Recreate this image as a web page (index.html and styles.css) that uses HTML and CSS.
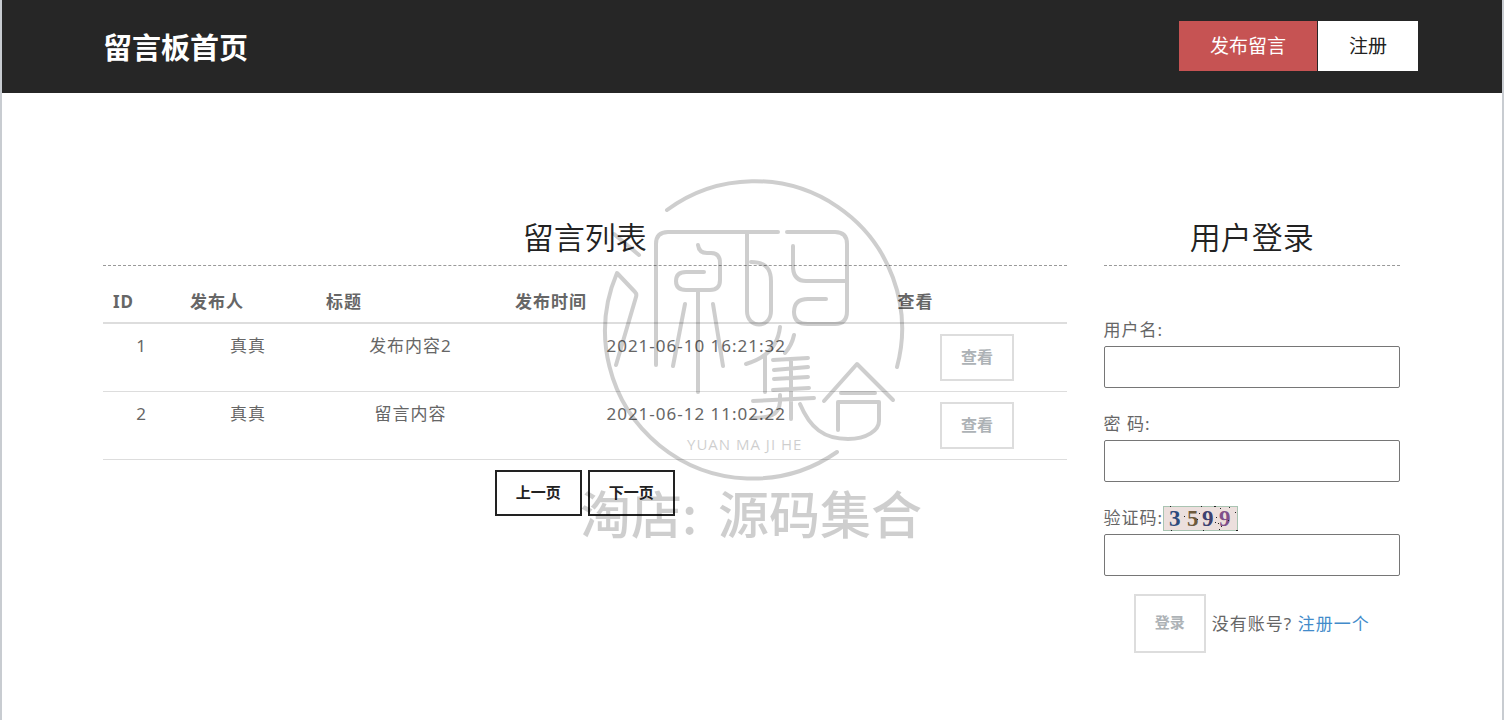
FILE: index.html
```html
<!DOCTYPE html>
<html lang="zh-CN">
<head>
    <meta charset="UTF-8">
    <meta name="viewport" content="width=device-width, initial-scale=1.0">
    <title>留言板首页</title>
    <link rel="stylesheet" href="styles.css">
</head>
<body>
    <header class="header">
        <h1 class="logo">留言板首页</h1>
        <nav class="nav">
            <a href="#post" class="nav-link nav-post">发布留言</a>
            <a href="#register" class="nav-link">注册</a>
        </nav>
    </header>

    <main class="content">
        <section class="messages">
            <h2 class="title">留言列表</h2>
            <table class="table">
                <colgroup>
                    <col class="col-id">
                    <col class="col-user">
                    <col class="col-title">
                    <col>
                    <col class="col-view">
                </colgroup>
                <thead>
                    <tr>
                        <th>ID</th>
                        <th>发布人</th>
                        <th>标题</th>
                        <th>发布时间</th>
                        <th>查看</th>
                    </tr>
                </thead>
                <tbody>
                    <tr>
                        <td>1</td>
                        <td>真真</td>
                        <td>发布内容2</td>
                        <td>2021-06-10 16:21:32</td>
                        <td><button type="button" class="btn btn-view">查看</button></td>
                    </tr>
                    <tr>
                        <td>2</td>
                        <td>真真</td>
                        <td>留言内容</td>
                        <td>2021-06-12 11:02:22</td>
                        <td><button type="button" class="btn btn-view">查看</button></td>
                    </tr>
                </tbody>
            </table>
            <div class="pager">
                <button type="button" class="btn btn-page">上一页</button>
                <button type="button" class="btn btn-page">下一页</button>
            </div>
        </section>

        <aside class="login">
            <h2 class="title">用户登录</h2>
            <form class="login-form">
                <div class="field">
                    <label for="username">用户名:</label>
                    <input type="text" id="username">
                </div>
                <div class="field">
                    <label for="password">密 码:</label>
                    <input type="password" id="password">
                </div>
                <div class="field">
                    <div class="code-row">
                        <label for="code">验证码:</label>
                        <svg class="captcha" viewBox="0 0 75 25">
                            <rect x="0.5" y="0.5" width="74" height="24" fill="#ecdfdd" stroke="#a9c4b2"/>
                            <g class="captcha-text">
                                <text x="6" y="20" fill="#2c4a7c">3</text>
                                <text x="24" y="20" fill="#6d5a3c">5</text>
                                <text x="39" y="20" fill="#3d4170">9</text>
                                <text x="56" y="20" fill="#80508a">9</text>
                            </g>
                            <path d="M7 0h1v1h-1zM38 0h1v1h-1zM51 0h2v1h-2zM57 2h1v1h-1zM66 1h1v1h-1zM21 10h1v1h-1zM36 7h1v1h-1zM34 13h1v1h-1zM53 11h1v1h-1zM52 16h1v1h-1zM55 17h1v1h-1zM58 20h1v1h-1zM65 14h1v1h-1zM72 6h1v1h-1zM8 24h1v1h-1zM40 24h1v1h-1zM56 23h1v1h-1zM73 24h2v1h-2z" fill="#222"/>
                        </svg>
                    </div>
                    <input type="text" id="code">
                </div>
                <div class="submit-row">
                    <button type="submit" class="btn btn-login">登录</button>
                    <span>没有账号? <a href="#register">注册一个</a></span>
                </div>
            </form>
        </aside>
    </main>

    <!-- watermark -->
    <svg class="watermark" viewBox="575 175 350 370">
        <g class="mark-lines">
            <!-- circle and water strokes -->
            <path d="M667 210A147.500 147.500 0 0 1 897 367"/>
            <path d="M837 452A147.500 147.500 0 0 1 617 273L635 292Q637 294 636 297L616 365"/>
            <path d="M614 234L639 255"/>
            <path d="M778 232H668Q656 232 656 244V365"/>
            <path d="M698 245Q699 253 707 253H711Q720 253 720 263V280Q720 290 710 290H686Q676 290 676 281Q676 272 686 272H704M698 291V392M685 304L673 366M713 304L723 366"/>
            <path d="M747 232V311C747 329 771 329 771 311V281C771 266 763 262 751 262"/>
            <path d="M787 232H835Q847 232 847 244V311Q847 324 835 324H808Q794 324 794 312Q794 299 808 299H826M793 246V268Q794 281 806 281H846"/>
            <path d="M780 327Q777 355 746 364M765 355V392M794 335Q792 345 785 353"/>
            <path d="M773 360L808 358M774 370L808 367M774 379L808 377M773 390L809 388M791 359V419M753 401L814 398"/>
            <path d="M780 395V402C779 416 768 418 753 418"/>
            <path d="M800 404C810 428 824 439 848 439C867 439 879 430 879 421V402H838V430"/>
            <path d="M824 401L857 364L893 400M841 393H875"/>
        </g>
        <text class="mark-latin" x="687" y="450">YUAN MA JI HE</text>
        <text class="mark-shop" x="580" y="534">淘店:</text>
        <text class="mark-shop" x="718" y="534">源码集合</text>
    </svg>
</body>
</html>
```

FILE: styles.css
```css
* {
    box-sizing: border-box;
}

body {
    position: relative;
    margin: 0;
    min-height: 100vh;
    border-left: 2px solid #c8ccd1;
    border-right: 2px solid #c8ccd1;
    background-color: #fff;
    color: #666;
    font-family: "Noto Sans", "Noto Sans CJK SC", sans-serif;
    font-size: 17px;
    line-height: 24px;
    letter-spacing: 1px;
}

h1, h2 {
    margin: 0;
    letter-spacing: 0;
}

a {
    color: #428bca;
    text-decoration: none;
}

.header {
    display: flex;
    align-items: center;
    justify-content: space-between;
    padding: 21px 84px 22px 101px;
    background-color: #262626;
}

.logo {
    padding-top: 4px;
    color: #fff;
    font-size: 29px;
    line-height: 40px;
}

.nav {
    display: flex;
    gap: 1px;
}

.nav-link {
    padding: 0 31px;
    background-color: #fff;
    color: #222;
    font-size: 19px;
    line-height: 50px;
    letter-spacing: 0;
}

.nav-post {
    background-color: #c65353;
    color: #fff;
}

.content {
    display: grid;
    grid-template-columns: 13fr 4fr;
    gap: 37px;
    padding: 125px 102px 60px 101px;
}

.title {
    padding-bottom: 11px;
    border-bottom: 1px dashed #999;
    color: #222;
    font-family: "Noto Sans CJK SC", sans-serif;
    font-size: 31px;
    font-weight: 350;
    line-height: 36px;
    text-align: center;
}

.table {
    width: 100%;
    margin-top: 12px;
    border-collapse: separate;
    border-spacing: 0;
    table-layout: fixed;
}

.col-id {
    width: 77px;
}

.col-user {
    width: 136px;
}

.col-title {
    width: 189px;
}

.col-view {
    width: 179px;
}

th, td {
    padding: 10px;
    vertical-align: top;
}

th {
    padding: 12px 10px 8px;
    border-bottom: 2px solid #ddd;
    text-align: left;
}

td {
    border-bottom: 1px solid #ddd;
    text-align: center;
}

.btn {
    padding: 0 19px 4px;
    border: 2px solid #ddd;
    background-color: transparent;
    color: #adb2b6;
    font-family: inherit;
    font-size: 15px;
    font-weight: bold;
    cursor: pointer;
}

.btn-view {
    display: block;
    height: 47px;
    margin: 0 auto;
    font-size: 16px;
}

.btn-page {
    height: 46px;
    border-color: #222;
    color: #222;
}

.btn-login {
    height: 59px;
}

.pager {
    display: flex;
    justify-content: center;
    gap: 6px;
    margin-top: 10px;
}

.login-form {
    margin-top: 52px;
}

.field {
    margin-bottom: 24px;
}

.field label {
    display: block;
}

.field input {
    display: block;
    width: 100%;
    height: 42px;
    margin-top: 4px;
    padding: 0 8px;
    border: 1px solid #767676;
    border-radius: 2px;
    font: inherit;
}

.code-row {
    display: flex;
    align-items: center;
    height: 24px;
}

.captcha {
    width: 75px;
    height: 25px;
}

.captcha-text {
    font-family: "Liberation Serif", serif;
    font-size: 23px;
    font-weight: bold;
    letter-spacing: 0;
}

.field:nth-child(3) {
    margin-bottom: 18px;
}

.submit-row {
    display: flex;
    align-items: center;
    justify-content: center;
    gap: 6px;
    white-space: nowrap;
}

.watermark {
    position: absolute;
    top: 175px;
    left: calc(50% - 177px);
    width: 350px;
    height: 370px;
    overflow: visible;
    opacity: 0.19;
    pointer-events: none;
}

.mark-lines {
    fill: none;
    stroke: #000;
    stroke-width: 4;
    stroke-linecap: round;
    stroke-linejoin: round;
}

.mark-latin {
    font-family: "Open Sans", sans-serif;
    font-size: 15px;
}

.mark-shop {
    font-family: "Noto Sans CJK SC", sans-serif;
    font-size: 51px;
    font-weight: 500;
    letter-spacing: 0;
}
```
